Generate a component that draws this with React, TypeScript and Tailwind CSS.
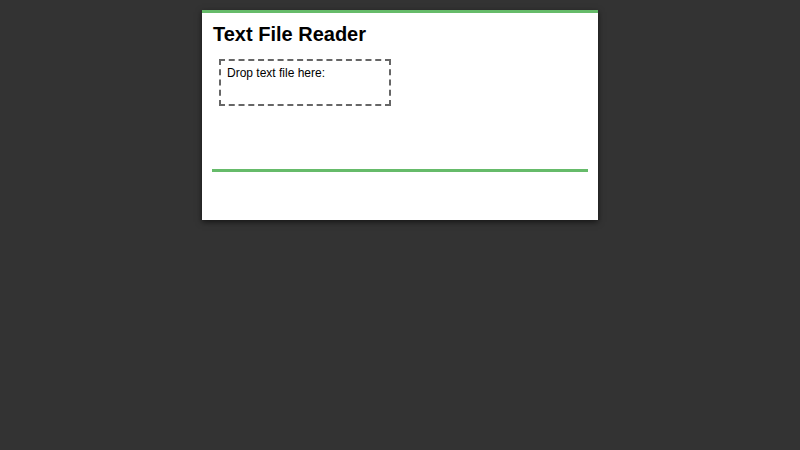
import React from 'react';

export default function App() {
  return (
    <div className="min-h-screen w-full bg-[#333333] pt-[10px] font-['Liberation_Sans',Arial,sans-serif]">
      <div className="mx-auto w-[396px] h-[210px] bg-white border-t-[3px] border-[#66bb6a] shadow-[0_2px_6px_rgba(0,0,0,0.6)] pl-[11px] pr-[10px] pt-[9px]">
        <h1 className="text-[20px] font-bold leading-[24px] text-black">Text File Reader</h1>
        <div className="mt-[13px] ml-[6px] w-[172px] h-[47px] border-2 border-dashed border-[#666666] px-[6px] pt-[5px] text-[12px] leading-[14px] text-black">
          Drop text file here:
        </div>
        <div className="mt-[63px] -ml-px h-[3px] bg-[#66bb6a]" />
      </div>
    </div>
  );
}
